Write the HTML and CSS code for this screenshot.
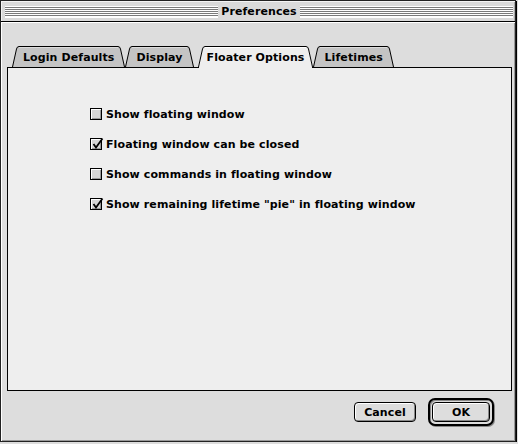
FILE: index.html
```html
<!DOCTYPE html>
<html>
<head>
<meta charset="utf-8">
<link rel="stylesheet" href="styles.css">
</head>
<body>
<div class="window">
  <div class="titlebar">
    <div class="stripes"></div>
    <div class="title">Preferences</div>
    <div class="stripes"></div>
  </div>
  <div class="content">
    <div class="tabs">
      <div class="tab">
        <svg class="slant" width="7" height="21" viewBox="0 0 7 21"><path class="fill" d="M0,21 L4.5,3 Q5,0 7,0 L7,21 Z"/><path class="edge" d="M0.5,21 L4.5,3 Q5,0.5 7,0.5"/></svg>
        <span class="label">Login Defaults</span>
        <svg class="slant" width="7" height="21" viewBox="0 0 7 21"><path class="fill" d="M7,21 L2.5,3 Q2,0 0,0 L0,21 Z"/><path class="edge" d="M6.5,21 L2.5,3 Q2,0.5 0,0.5"/></svg>
      </div>
      <div class="tab">
        <svg class="slant" width="7" height="21" viewBox="0 0 7 21"><path class="fill" d="M0,21 L4.5,3 Q5,0 7,0 L7,21 Z"/><path class="edge" d="M0.5,21 L4.5,3 Q5,0.5 7,0.5"/></svg>
        <span class="label">Display</span>
        <svg class="slant" width="7" height="21" viewBox="0 0 7 21"><path class="fill" d="M7,21 L2.5,3 Q2,0 0,0 L0,21 Z"/><path class="edge" d="M6.5,21 L2.5,3 Q2,0.5 0,0.5"/></svg>
      </div>
      <div class="tab sel">
        <svg class="slant" width="7" height="21" viewBox="0 0 7 21"><path class="fill" d="M0,21 L4.5,3 Q5,0 7,0 L7,21 Z"/><path class="edge" d="M0.5,21 L4.5,3 Q5,0.5 7,0.5"/></svg>
        <span class="label">Floater Options</span>
        <svg class="slant" width="7" height="21" viewBox="0 0 7 21"><path class="fill" d="M7,21 L2.5,3 Q2,0 0,0 L0,21 Z"/><path class="edge" d="M6.5,21 L2.5,3 Q2,0.5 0,0.5"/></svg>
      </div>
      <div class="tab">
        <svg class="slant" width="7" height="21" viewBox="0 0 7 21"><path class="fill" d="M0,21 L4.5,3 Q5,0 7,0 L7,21 Z"/><path class="edge" d="M0.5,21 L4.5,3 Q5,0.5 7,0.5"/></svg>
        <span class="label">Lifetimes</span>
        <svg class="slant" width="7" height="21" viewBox="0 0 7 21"><path class="fill" d="M7,21 L2.5,3 Q2,0 0,0 L0,21 Z"/><path class="edge" d="M6.5,21 L2.5,3 Q2,0.5 0,0.5"/></svg>
      </div>
    </div>
    <div class="panel">
      <div class="option"><span class="cb"></span><span>Show floating window</span></div>
      <div class="option"><span class="cb checked"><svg class="check" width="14" height="14" viewBox="0 0 14 14"><path d="M3.5,7 L6,10.5 L12.5,1.5"/></svg></span><span>Floating window can be closed</span></div>
      <div class="option"><span class="cb"></span><span>Show commands in floating window</span></div>
      <div class="option"><span class="cb checked"><svg class="check" width="14" height="14" viewBox="0 0 14 14"><path d="M3.5,7 L6,10.5 L12.5,1.5"/></svg></span><span>Show remaining lifetime "pie" in floating window</span></div>
    </div>
    <div class="buttons">
      <div class="btn">Cancel</div>
      <div class="default-ring"><div class="btn ok">OK</div></div>
    </div>
  </div>
</div>
</body>
</html>
```
FILE: styles.css
```css
html, body {
  margin: 0;
  padding: 0;
  background: #dddddd;
}
body {
  font-family: "DejaVu Sans", "Liberation Sans", sans-serif;
  font-weight: bold;
  font-size: 11px;
  letter-spacing: 0.1px;
  color: #000;
}
.window {
  width: 516px;
  height: 442px;
  box-sizing: border-box;
  border: 1px solid #222;
  box-shadow: 1px 1px 0 #000;
  background: #dddddd;
  display: flex;
  flex-direction: column;
}
.titlebar {
  height: 20px;
  border-bottom: 1px solid #000;
  display: flex;
  align-items: center;
  padding: 0 2px 0 4px;
  background: #dadada;
  box-shadow: inset 1px 1px 0 #f4f4f4, inset -1px 0 0 #aaa;
}
.stripes {
  flex: 1;
  height: 12px;
  margin-top: 1px;
  background: repeating-linear-gradient(to bottom, #ffffff 0 1px, #7a7a7a 1px 2px);
  box-shadow: inset 0 -1px 0 #fff;
}
.title {
  padding: 0 3px;
  line-height: 20px;
  margin-top: 1px;
}
.content {
  flex: 1;
  display: flex;
  flex-direction: column;
  padding: 24px 3px 0 6px;
  box-shadow: inset 1px 1px 0 #fff, inset -1px -1px 0 #999;
}
.tabs {
  display: flex;
  margin-left: 5px;
  height: 21px;
}
.tab {
  display: flex;
  height: 21px;
  position: relative;
}
.tab .slant {
  display: block;
  flex: none;
}
.tab .fill {
  fill: #c4c4c4;
}
.tab .edge {
  fill: none;
  stroke: #000;
  stroke-width: 1;
}
.tab .label {
  display: block;
  height: 20px;
  line-height: 21px;
  border-top: 1px solid #000;
  background: #c4c4c4;
  padding: 0 4px;
  box-shadow: inset 0 1px 0 #dcdcdc;
}
.tab.sel {
  z-index: 1;
  margin-left: 4px;
}
.tab.sel .label {
  padding: 0 2px;
}
.tab.sel .fill {
  fill: #eeeeee;
}
.tab.sel .label {
  background: #eeeeee;
  box-shadow: inset 0 1px 0 #fff;
}
.tab.sel::after {
  content: "";
  position: absolute;
  left: 1px;
  right: 1px;
  bottom: -1px;
  height: 1px;
  background: #eeeeee;
}
.panel {
  height: 324px;
  box-sizing: border-box;
  border: 1px solid #000;
  background: #eeeeee;
  padding: 37px 0 0 82px;
  display: flex;
  flex-direction: column;
  gap: 12px;
}
.option {
  display: flex;
  align-items: center;
  height: 18px;
  gap: 4px;
}
.cb {
  position: relative;
  width: 12px;
  height: 12px;
  box-sizing: border-box;
  border: 1px solid #000;
  background: #d6d6d6;
  box-shadow: inset 1px 1px 0 #fff, inset -1px -1px 0 #999;
  flex: none;
}
.check {
  position: absolute;
  left: -1px;
  top: -2px;
}
.check path {
  fill: none;
  stroke: #000;
  stroke-width: 1.8;
}
.buttons {
  display: flex;
  justify-content: flex-end;
  align-items: center;
  gap: 12px;
  margin-top: 7px;
  padding-right: 18px;
}
.btn {
  width: 62px;
  height: 20px;
  box-sizing: border-box;
  border: 1px solid #000;
  border-radius: 4px;
  background: #dddddd;
  box-shadow: inset 1px 1px 0 #fff, inset -1px -1px 0 #888;
  display: flex;
  align-items: center;
  justify-content: center;
}
.default-ring {
  border: 2px solid #000;
  border-radius: 7px;
  padding: 2px;
  background: #dddddd;
  box-shadow: inset 1px 1px 0 #888, 1px 1px 0 #888;
}
.btn.ok {
  width: 58px;
}
```
